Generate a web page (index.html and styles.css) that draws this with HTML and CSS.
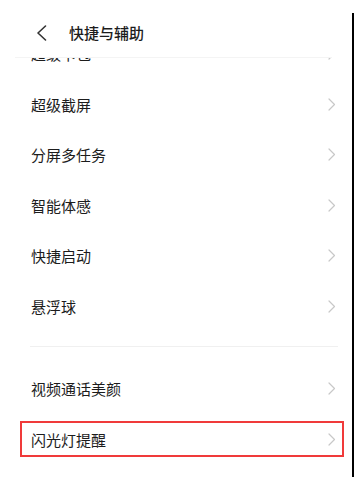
FILE: index.html
```html
<!DOCTYPE html>
<html lang="zh-CN">
<head>
  <meta charset="UTF-8" />
  <meta name="viewport" content="width=device-width, initial-scale=1.0" />
  <title>快捷与辅助</title>
  <link rel="stylesheet" href="styles.css">
</head>
<body>
  <div class="screen">
    <div class="header">
      <svg class="back" width="11" height="16" viewBox="0 0 11 16">
        <polyline points="9.5,1 2,8 9.5,15" fill="none" stroke="#333" stroke-width="1.6" stroke-linecap="round" stroke-linejoin="round" />
      </svg>
      <span class="title">快捷与辅助</span>
    </div>

    <div class="viewport">
      <div class="list">
        <div class="row"><span>超级卡包</span><svg class="chev" width="8" height="13" viewBox="0 0 8 13"><polyline points="1,1 6.5,6.5 1,12" /></svg></div>
        <div class="row"><span>超级截屏</span><svg class="chev" width="8" height="13" viewBox="0 0 8 13"><polyline points="1,1 6.5,6.5 1,12" /></svg></div>
        <div class="row"><span>分屏多任务</span><svg class="chev" width="8" height="13" viewBox="0 0 8 13"><polyline points="1,1 6.5,6.5 1,12" /></svg></div>
        <div class="row"><span>智能体感</span><svg class="chev" width="8" height="13" viewBox="0 0 8 13"><polyline points="1,1 6.5,6.5 1,12" /></svg></div>
        <div class="row"><span>快捷启动</span><svg class="chev" width="8" height="13" viewBox="0 0 8 13"><polyline points="1,1 6.5,6.5 1,12" /></svg></div>
        <div class="row"><span>悬浮球</span><svg class="chev" width="8" height="13" viewBox="0 0 8 13"><polyline points="1,1 6.5,6.5 1,12" /></svg></div>

        <div class="divider"></div>

        <div class="row"><span>视频通话美颜</span><svg class="chev" width="8" height="13" viewBox="0 0 8 13"><polyline points="1,1 6.5,6.5 1,12" /></svg></div>
        <div class="row-wrap">
          <div class="row marked"><span>闪光灯提醒</span><svg class="chev" width="8" height="13" viewBox="0 0 8 13"><polyline points="1,1 6.5,6.5 1,12" /></svg></div>
        </div>
      </div>
    </div>
  </div>
  <div class="edge"></div>
</body>
</html>
```

FILE: styles.css
```css
html, body {
  height: 100%;
}
body {
  margin: 0;
  background: #fff;
  color: #1c1c1c;
  font-family: "Noto Sans CJK SC", "Noto Sans", sans-serif;
  display: flex;
  overflow: hidden;
}
.screen {
  width: 352px;
  height: 477px;
  display: flex;
  flex-direction: column;
}
.edge {
  width: 2px;
  margin-top: 13px;
  height: 464px;
  background: #000;
}
.header {
  height: 58px;
  box-sizing: border-box;
  margin: 0 20px 0 15px;
  padding: 8px 0 0 21px;
  display: flex;
  align-items: center;
  border-bottom: 1px solid #f4f4f4;
}
.back {
  display: block;
}
.title {
  margin-left: 22px;
  font-size: 15px;
  font-weight: 500;
}
.viewport {
  flex: 1;
  overflow: hidden;
}
.list {
  margin-top: -29.75px;
}
.row {
  height: 50.5px;
  display: flex;
  align-items: center;
  justify-content: space-between;
  padding: 0 16px 0 31px;
  font-size: 15px;
}
.chev polyline {
  fill: none;
  stroke: #c8c8c8;
  stroke-width: 1.2;
  stroke-linecap: round;
  stroke-linejoin: round;
}
.divider {
  height: 1px;
  background: #f0f0f0;
  margin: 14.75px 14px 16.25px 30px;
}
.row-wrap {
  height: 50.5px;
  padding: 7px 8px 0 20px;
  box-sizing: border-box;
}
.row.marked {
  height: 36.5px;
  box-sizing: border-box;
  border: 2px solid #f03a3a;
  padding: 0 6px 0 9px;
}
```
